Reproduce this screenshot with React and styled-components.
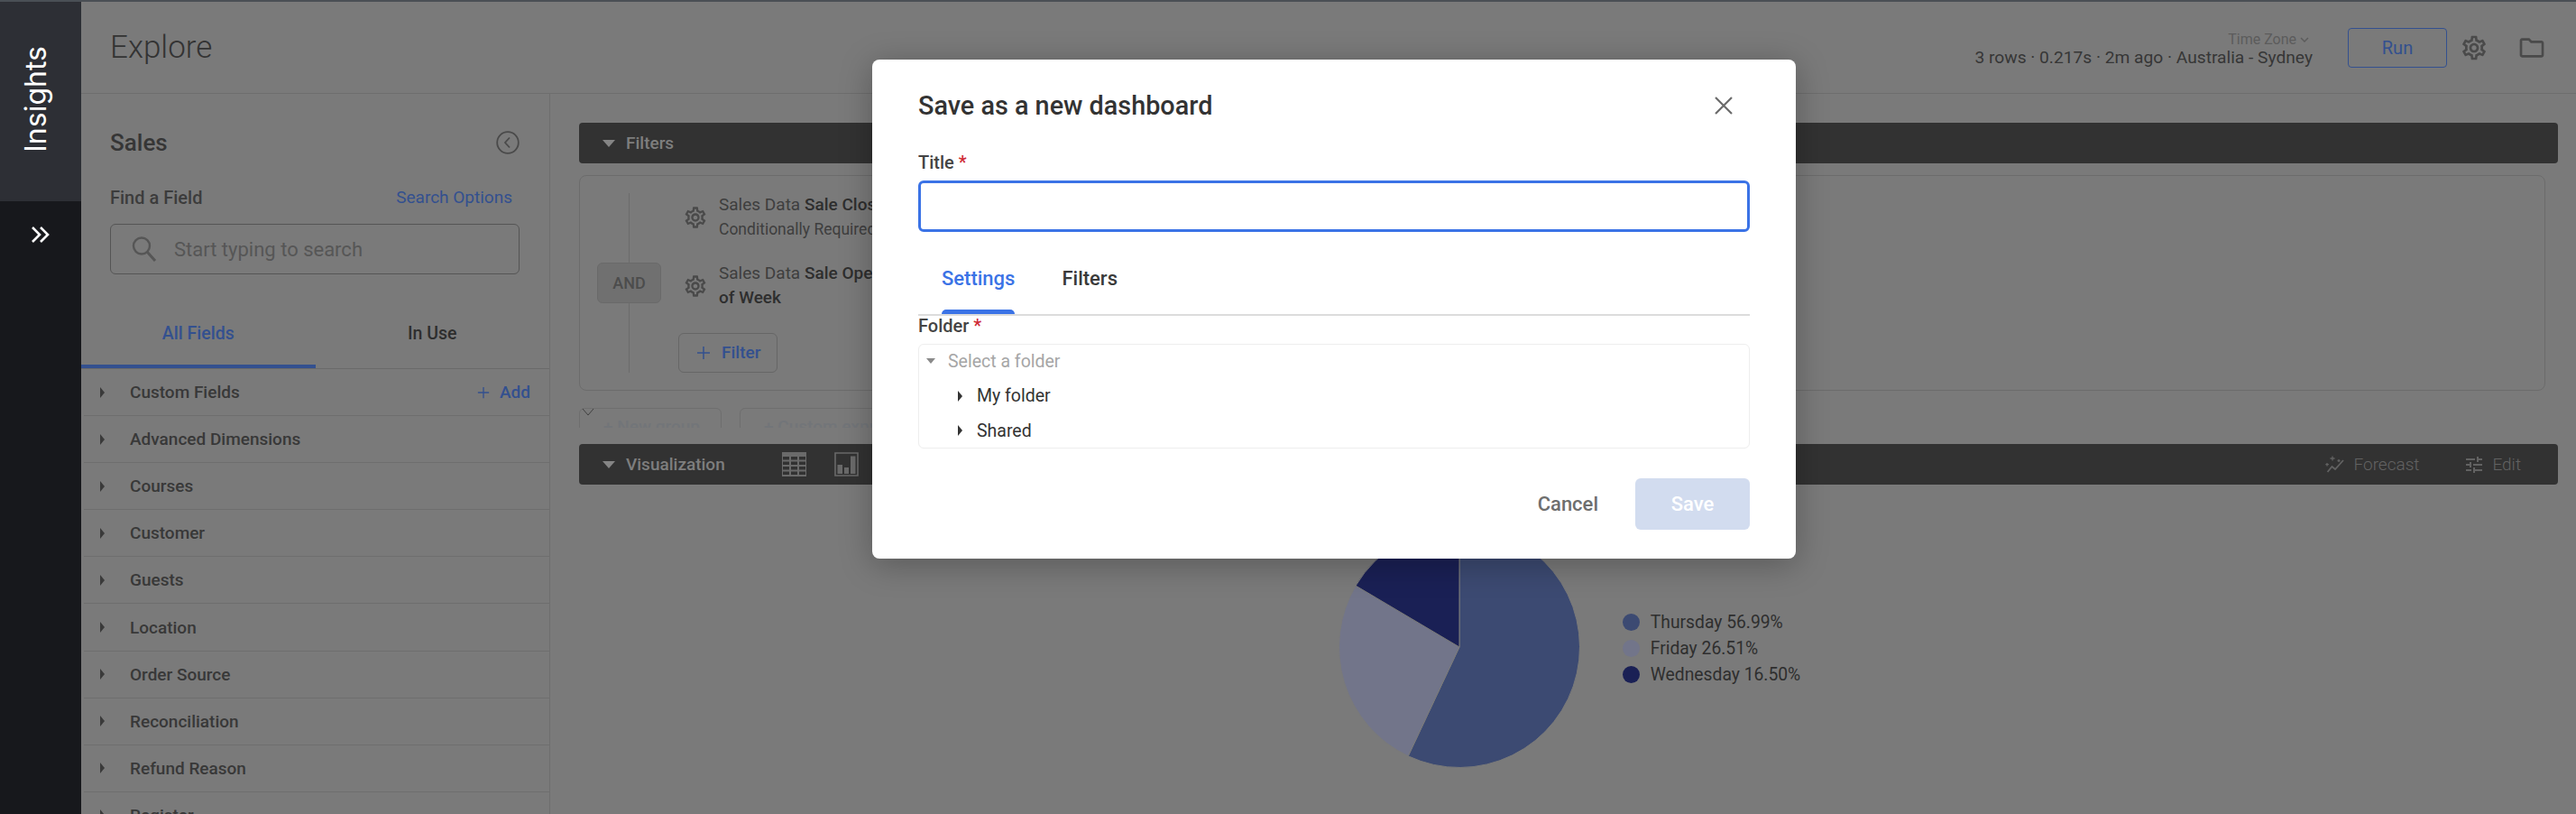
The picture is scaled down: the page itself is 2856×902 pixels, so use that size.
import React from "react";
import styled, { createGlobalStyle } from "styled-components";
import { MdOutlineSettings, MdOutlineFolder, MdTune, MdKeyboardArrowDown } from "react-icons/md";

const GlobalStyle = createGlobalStyle`
  html, body {
    margin: 0;
    padding: 0;
    background: #7a7a7a;
  }
  * {
    box-sizing: border-box;
  }
  body {
    font-family: Roboto, "Liberation Sans", sans-serif;
    color: #383838;
  }
`;

const Page = styled.div`
  position: relative;
  width: 2856px;
  height: 902px;
  overflow: hidden;
  display: flex;
  flex-direction: column;
  background: #7a7a7a;
`;

const TopStrip = styled.div`
  height: 2px;
  flex: none;
  background: #4a4f55;
`;

const Shell = styled.div`
  flex: 1;
  min-height: 0;
  display: flex;
`;

const Nav = styled.nav`
  width: 90px;
  flex: none;
  background: #17181c;
  display: flex;
  flex-direction: column;
  align-items: center;
`;

const NavBrand = styled.div`
  width: 100%;
  height: 221px;
  background: #2d2f35;
  display: flex;
  justify-content: flex-start;
  align-items: flex-start;
  padding: 49px 0 0 20px;
`;

const NavTitle = styled.span`
  writing-mode: vertical-rl;
  transform: rotate(180deg);
  font-family: Inter, Roboto, sans-serif;
  font-size: 32px;
  font-weight: 400;
  line-height: 40px;
  color: #fff;
`;

const NavExpand = styled.div`
  margin-top: 27px;
  height: 24px;
  color: #fff;
`;

const Main = styled.div`
  flex: 1;
  min-width: 0;
  display: flex;
  flex-direction: column;
`;

const Header = styled.header`
  height: 102px;
  flex: none;
  border-bottom: 1px solid #6e6e6e;
  display: flex;
  align-items: flex-start;
  justify-content: space-between;
  padding: 29px 33px 0 32px;
`;

const PageTitle = styled.h1`
  margin: 0;
  font-size: 35px;
  line-height: 44px;
  font-weight: 300;
  color: #333;
`;

const HeaderRight = styled.div`
  display: flex;
  align-items: center;
`;

const Status = styled.div`
  display: flex;
  flex-direction: column;
  align-items: flex-end;
  margin-right: 39px;
  margin-top: 1px;
`;

const TimeZone = styled.div`
  display: flex;
  align-items: center;
  font-size: 16px;
  line-height: 20px;
  color: #5c5c5c;
`;

const StatusLine = styled.div`
  font-size: 19.2px;
  line-height: 20px;
  color: #363636;
`;

const RunButton = styled.button`
  width: 110px;
  height: 44px;
  border: 1.5px solid #33508f;
  border-radius: 4px;
  background: transparent;
  font: 400 20px Roboto, sans-serif;
  color: #33508f;
  margin-right: 14px;
`;

const HeaderIcon = styled.span`
  display: flex;
  color: #4a4a4a;
  margin-left: ${(p) => p.$gap || 0}px;
`;

const Body = styled.div`
  flex: 1;
  min-height: 0;
  display: flex;
`;

const Explorer = styled.aside`
  width: 520px;
  flex: none;
  border-right: 1px solid #6e6e6e;
  display: flex;
  flex-direction: column;
`;

const ExplorerHead = styled.div`
  height: 30px;
  flex: none;
  margin: 39px 33px 0 32px;
  display: flex;
  align-items: center;
  justify-content: space-between;
`;

const ExplorerTitle = styled.div`
  font-size: 26px;
  font-weight: 500;
  color: #363636;
`;

const FindRow = styled.div`
  flex: none;
  margin: 34px 41px 0 32px;
  display: flex;
  justify-content: space-between;
  font-size: 20px;
  line-height: 24px;
  font-weight: 500;
  color: #3c3c3c;
`;

const BlueLink = styled.span`
  font-size: 19px;
  font-weight: 400;
  color: #33508f;
`;

const SearchBox = styled.div`
  flex: none;
  margin: 17px 33px 0 32px;
  height: 56px;
  border: 1.5px solid #555;
  border-radius: 6px;
  display: flex;
  align-items: center;
  padding-left: 22px;
  gap: 18px;
  font-size: 22px;
  color: #565656;
`;

const FieldTabs = styled.div`
  margin-top: 40px;
  height: 65px;
  flex: none;
  display: flex;
  border-bottom: 1px solid #6a6a6a;
`;

const FieldTab = styled.div`
  width: 260px;
  height: 64px;
  padding-top: 14px;
  line-height: 24px;
  text-align: center;
  font-size: 19.5px;
  font-weight: 500;
  color: ${(p) => (p.$active ? "#33508f" : "#2e2e2e")};
  border-bottom: 4px solid ${(p) => (p.$active ? "#33508f" : "transparent")};
`;

const FieldRow = styled.div`
  height: 52.1px;
  flex: none;
  margin-left: 3px;
  border-bottom: 1px solid #6e6e6e;
  display: flex;
  align-items: center;
  padding: 0 21px 0 18px;
  font-size: 19px;
  font-weight: 500;
  color: #383838;
`;

const RightCaret = styled.span`
  width: 0;
  height: 0;
  flex: none;
  border-style: solid;
  border-width: ${(p) => p.$size || 6}px 0 ${(p) => p.$size || 6}px ${(p) => (p.$size || 6) - 1}px;
  border-color: transparent transparent transparent ${(p) => p.$color || "#3a3a3a"};
`;

const FieldName = styled.span`
  margin-left: 28px;
  flex: 1;
`;

const AddField = styled.span`
  display: flex;
  align-items: center;
  gap: 11px;
  color: #33508f;
  font-weight: 500;
`;

const Workspace = styled.section`
  flex: 1;
  min-width: 0;
  padding: 32px 20px 0 32px;
`;

const SectionBar = styled.div`
  height: 45px;
  margin-top: ${(p) => p.$top || 0}px;
  background: #323232;
  border-radius: 4px;
  display: flex;
  align-items: center;
  padding-left: 26px;
  font-size: 19px;
  font-weight: 500;
  color: #7e7e7e;
`;

const DownCaret = styled.span`
  width: 0;
  height: 0;
  flex: none;
  border-style: solid;
  border-width: ${(p) => p.$h || 8}px ${(p) => p.$w || 7}px 0;
  border-color: ${(p) => p.$color || "#858585"} transparent transparent;
  margin-right: ${(p) => p.$gap ?? 12}px;
`;

const ViewIcons = styled.div`
  display: flex;
  align-items: center;
  gap: 31px;
  margin-left: 63px;
  flex: 1;
`;

const BarAction = styled.span`
  display: flex;
  align-items: center;
  gap: ${(p) => p.$inner}px;
  font-size: 19px;
  font-weight: 300;
  color: #626262;
  margin-right: ${(p) => p.$gap}px;
`;

const FilterBox = styled.div`
  height: 239px;
  margin: 13px 14px 0 0;
  border: 1px solid #6c6c6c;
  border-radius: 8px;
  padding: 19px 0 19px 19px;
  display: flex;
  gap: 19px;
`;

const AndColumn = styled.div`
  width: 71px;
  flex: none;
  display: flex;
  flex-direction: column;
  align-items: center;
`;

const AndLine = styled.div`
  width: 1px;
  flex: 1;
  background: #6c6c6c;
`;

const AndPill = styled.div`
  width: 71px;
  height: 45px;
  flex: none;
  display: flex;
  align-items: center;
  justify-content: center;
  background: #707070;
  border: 1px solid #6a6a6a;
  border-radius: 6px;
  font-size: 18px;
  font-weight: 500;
  color: #4c4c4c;
`;

const FilterColumn = styled.div`
  display: flex;
  flex-direction: column;
`;

const FilterRow = styled.div`
  display: flex;
  align-items: center;
  gap: 12px;
  padding-left: 5px;
  margin-bottom: 23px;
  height: 54px;
  color: #4a4a4a;
`;

const FilterText = styled.div`
  white-space: nowrap;
  font-size: 19px;
  line-height: 26.5px;
  color: #3e3e3e;

  b {
    font-weight: 500;
    color: #2e2e2e;
  }
`;

const FilterHint = styled.span`
  font-size: 17.5px;
`;

const AddFilter = styled.div`
  width: 110px;
  height: 45px;
  margin-top: 2px;
  border: 1px solid #666;
  border-radius: 6px;
  display: flex;
  align-items: center;
  gap: 12px;
  padding-left: 19px;
  font-size: 19px;
  font-weight: 500;
  color: #33508f;
`;

const GroupActions = styled.div`
  position: relative;
  height: 22px;
  margin-top: 19px;
  overflow: hidden;
  display: flex;
  gap: 20px;
  align-items: flex-start;
`;

const GroupButton = styled.div`
  height: 45px;
  width: ${(p) => p.$width}px;
  flex: none;
  border: 1px solid #6e6e6e;
  border-radius: 6px;
  padding: 8px 0 0 26px;
  font-size: 19px;
  line-height: 24px;
  font-weight: 500;
  color: #727579;
`;

const CollapseMark = styled.svg`
  position: absolute;
  left: 3px;
  top: 0;
`;

const ChartArea = styled.div`
  margin-top: 46px;
  padding-left: 2px;
  display: flex;
  justify-content: center;
  align-items: center;
  gap: 47px;
`;

const Legend = styled.div`
  display: flex;
  flex-direction: column;
  gap: 5px;
  margin-top: 3px;
`;

const LegendItem = styled.div`
  display: flex;
  align-items: center;
  gap: 12px;
  height: 24px;
  font-size: 19.3px;
  color: #2e2e2e;
`;

const LegendDot = styled.span`
  width: 19px;
  height: 19px;
  border-radius: 50%;
  background: ${(p) => p.$color};
`;

const Dialog = styled.div`
  position: absolute;
  left: 967px;
  top: 66px;
  width: 1024px;
  height: 553px;
  background: #fff;
  border-radius: 8px;
  box-shadow: 0 6px 36px rgba(0, 0, 0, 0.28);
  padding: 34px 51px 32px;
  display: flex;
  flex-direction: column;
`;

const DialogHead = styled.div`
  height: 34px;
  flex: none;
  display: flex;
  align-items: center;
  justify-content: space-between;
`;

const DialogTitle = styled.h2`
  margin: 0;
  font-size: 28.8px;
  font-weight: 500;
  color: #333;
`;

const CloseIcon = styled.svg`
  margin-right: 18px;
`;

const FormLabel = styled.label`
  display: block;
  margin-top: ${(p) => p.$top || 0}px;
  font-size: 20px;
  line-height: ${(p) => p.$line || 26}px;
  font-weight: 500;
  color: #444;

  i {
    font-style: normal;
    color: #cf2a35;
  }
`;

const TitleInput = styled.input`
  display: block;
  width: 100%;
  height: 57px;
  margin-top: 7px;
  flex: none;
  border: 3px solid #3b73e6;
  border-radius: 6px;
  outline: none;
  background: #fff;
`;

const DialogTabs = styled.div`
  margin-top: 20px;
  flex: none;
  display: flex;
  gap: 52px;
  padding-left: 26px;
  border-bottom: 2px solid #dcdcdc;
`;

const DialogTab = styled.div`
  padding-top: 20px;
  font-size: 22px;
  line-height: 24px;
  font-weight: 500;
  color: ${(p) => (p.$active ? "#3b73e6" : "#3a3a3a")};

  &::after {
    content: "";
    display: block;
    height: 5px;
    margin-top: 22px;
    border-radius: 5px 5px 0 0;
    background: ${(p) => (p.$active ? "#3b73e6" : "transparent")};
  }
`;

const Tree = styled.div`
  margin-top: 8px;
  flex: none;
  height: 116px;
  border: 1px solid #eeeeee;
  border-radius: 6px;
`;

const TreeRow = styled.div`
  height: 38.5px;
  display: flex;
  align-items: center;
  gap: ${(p) => (p.$root ? 14 : 16)}px;
  padding-left: ${(p) => (p.$root ? 8 : 43)}px;
  font-size: 19.5px;
  color: ${(p) => (p.$root ? "#a6a6a6" : "#333")};
  margin-top: ${(p) => (p.$root ? -1 : 0)}px;
`;

const DialogFooter = styled.div`
  margin-top: 33px;
  display: flex;
  align-items: center;
  justify-content: flex-end;
  gap: 41px;
`;

const CancelButton = styled.span`
  font-size: 22px;
  font-weight: 500;
  color: #6e6e6e;
`;

const SaveButton = styled.div`
  width: 127px;
  height: 57px;
  border-radius: 6px;
  background: #d2dcef;
  display: flex;
  align-items: center;
  justify-content: center;
  font-size: 22px;
  font-weight: 500;
  color: #fff;
`;

const FIELDS = [
  "Advanced Dimensions",
  "Courses",
  "Customer",
  "Guests",
  "Location",
  "Order Source",
  "Reconciliation",
  "Refund Reason",
  "Register",
];

const SLICES = [
  { label: "Thursday", value: 56.99, color: "#3c4a72" },
  { label: "Friday", value: 26.51, color: "#72758a" },
  { label: "Wednesday", value: 16.5, color: "#1a2055" },
];

function piePaths(cx, cy, r) {
  let start = 0;
  return SLICES.map((s) => {
    const end = start + (s.value / 100) * Math.PI * 2;
    const large = end - start > Math.PI ? 1 : 0;
    const x1 = cx + r * Math.sin(start);
    const y1 = cy - r * Math.cos(start);
    const x2 = cx + r * Math.sin(end);
    const y2 = cy - r * Math.cos(end);
    start = end;
    return { ...s, d: `M${cx} ${cy}L${x1} ${y1}A${r} ${r} 0 ${large} 1 ${x2} ${y2}Z` };
  });
}

const PieChart = () => (
  <svg width="268" height="268" viewBox="0 0 268 268">
    {piePaths(134, 134, 133.5).map((s) => (
      <path key={s.label} d={s.d} fill={s.color} stroke="#7a7a7a" strokeWidth="1" />
    ))}
  </svg>
);

const SearchIcon = () => (
  <svg width="30" height="30" viewBox="0 0 30 30" fill="none" stroke="#565656" strokeWidth="2.4">
    <circle cx="12" cy="11.5" r="9" />
    <path d="M18.5 18.5L27 28" strokeWidth="3" />
  </svg>
);

const CollapseIcon = () => (
  <svg width="26" height="26" viewBox="0 0 26 26" fill="none" stroke="#4a4a4a" strokeWidth="1.8">
    <circle cx="13" cy="13" r="11.8" />
    <path d="M15 7.5L10 13l5 5.5" />
  </svg>
);

const DoubleChevron = () => (
  <svg width="22" height="20" viewBox="0 0 22 20" fill="none" stroke="#fff" strokeWidth="2.6">
    <path d="M2 2l8 8-8 8M11 2l8 8-8 8" />
  </svg>
);

const TableIcon = () => (
  <svg width="27" height="27" viewBox="0 0 27 27" fill="#6a6a6a">
    <path d="M0 0h27v27H0z" fill="#6a6a6a" />
    <path
      d="M1 5h7v3.5H1zM10 5h7v3.5h-7zM19 5h7v3.5h-7zM1 10.5h7V14H1zM10 10.5h7V14h-7zM19 10.5h7V14h-7zM1 16h7v3.5H1zM10 16h7v3.5h-7zM19 16h7v3.5h-7zM1 21.5h7V25H1zM10 21.5h7V25h-7zM19 21.5h7V25h-7z"
      fill="#323232"
    />
  </svg>
);

const BarsIcon = () => (
  <svg width="27" height="27" viewBox="0 0 27 27">
    <path d="M1 1h25v25H1z" fill="none" stroke="#6a6a6a" strokeWidth="1.6" />
    <path d="M3.5 14h5.5v10H3.5zM11 17h5v7h-5zM18 4.5h5.5V24H18z" fill="#6a6a6a" />
  </svg>
);

const ForecastIcon = () => (
  <svg width="22" height="20" viewBox="0 0 22 20" fill="none" stroke="#626262" strokeWidth="1.8">
    <path d="M2.5 18l5-6 3.5 3 9-10" />
    <path d="M8 0.5v5M5.5 3h5M2 8v3.5M0.3 9.7h3.6M15 4v3M13.5 5.5h3" strokeWidth="1.3" />
  </svg>
);

const PlusIcon = ({ size = 16, color = "#33508f" }) => (
  <svg width={size} height={size} viewBox="0 0 16 16" stroke={color} strokeWidth="1.5">
    <path d="M8 1v14M1 8h14" />
  </svg>
);

export default function App() {
  return (
    <>
      <GlobalStyle />
      <Page>
        <TopStrip />
        <Shell>
          <Nav>
            <NavBrand>
              <NavTitle>Insights</NavTitle>
            </NavBrand>
            <NavExpand>
              <DoubleChevron />
            </NavExpand>
          </Nav>
          <Main>
            <Header>
              <PageTitle>Explore</PageTitle>
              <HeaderRight>
                <Status>
                  <TimeZone>
                    Time Zone
                    <MdKeyboardArrowDown size={18} />
                  </TimeZone>
                  <StatusLine>3 rows · 0.217s · 2m ago · Australia - Sydney</StatusLine>
                </Status>
                <RunButton>Run</RunButton>
                <HeaderIcon>
                  <MdOutlineSettings size={32} />
                </HeaderIcon>
                <HeaderIcon $gap={32}>
                  <MdOutlineFolder size={32} />
                </HeaderIcon>
              </HeaderRight>
            </Header>
            <Body>
              <Explorer>
                <ExplorerHead>
                  <ExplorerTitle>Sales</ExplorerTitle>
                  <CollapseIcon />
                </ExplorerHead>
                <FindRow>
                  Find a Field
                  <BlueLink>Search Options</BlueLink>
                </FindRow>
                <SearchBox>
                  <SearchIcon />
                  Start typing to search
                </SearchBox>
                <FieldTabs>
                  <FieldTab $active>All Fields</FieldTab>
                  <FieldTab>In Use</FieldTab>
                </FieldTabs>
                <FieldRow>
                  <RightCaret />
                  <FieldName>Custom Fields</FieldName>
                  <AddField>
                    <PlusIcon size={14} />
                    Add
                  </AddField>
                </FieldRow>
                {FIELDS.map((name) => (
                  <FieldRow key={name}>
                    <RightCaret />
                    <FieldName>{name}</FieldName>
                  </FieldRow>
                ))}
              </Explorer>
              <Workspace>
                <SectionBar>
                  <DownCaret />
                  Filters
                </SectionBar>
                <FilterBox>
                  <AndColumn>
                    <AndLine />
                    <AndPill>AND</AndPill>
                    <AndLine />
                  </AndColumn>
                  <FilterColumn>
                    <FilterRow>
                      <MdOutlineSettings size={28} />
                      <FilterText>
                        Sales Data <b>Sale Closed Date</b>
                        <br />
                        <FilterHint>Conditionally Required</FilterHint>
                      </FilterText>
                    </FilterRow>
                    <FilterRow>
                      <MdOutlineSettings size={28} />
                      <FilterText>
                        Sales Data <b>Sale Opened Day</b>
                        <br />
                        <b>of Week</b>
                      </FilterText>
                    </FilterRow>
                    <AddFilter>
                      <PlusIcon />
                      Filter
                    </AddFilter>
                  </FilterColumn>
                </FilterBox>
                <GroupActions>
                  <GroupButton $width={158}>+ New group</GroupButton>
                  <GroupButton $width={240}>+ Custom expression</GroupButton>
                  <CollapseMark width="14" height="9" viewBox="0 0 14 9" fill="none" stroke="#404040" strokeWidth="1">
                    <path d="M1 1l6 7 6-7" />
                  </CollapseMark>
                </GroupActions>
                <SectionBar $top={18}>
                  <DownCaret />
                  Visualization
                  <ViewIcons>
                    <TableIcon />
                    <BarsIcon />
                  </ViewIcons>
                  <BarAction $gap={49} $inner={10}>
                    <ForecastIcon />
                    Forecast
                  </BarAction>
                  <BarAction $gap={41} $inner={8}>
                    <MdTune size={24} />
                    Edit
                  </BarAction>
                </SectionBar>
                <ChartArea>
                  <PieChart />
                  <Legend>
                    {SLICES.map((s) => (
                      <LegendItem key={s.label}>
                        <LegendDot $color={s.color} />
                        {s.label} {s.value.toFixed(2)}%
                      </LegendItem>
                    ))}
                  </Legend>
                </ChartArea>
              </Workspace>
            </Body>
          </Main>
        </Shell>
        <Dialog>
          <DialogHead>
            <DialogTitle>Save as a new dashboard</DialogTitle>
            <CloseIcon width="22" height="22" viewBox="0 0 22 22" stroke="#6a6a6a" strokeWidth="2.2">
              <path d="M2 2l18 18M20 2L2 20" />
            </CloseIcon>
          </DialogHead>
          <FormLabel $top={33}>
            Title <i>*</i>
          </FormLabel>
          <TitleInput />
          <DialogTabs>
            <DialogTab $active>Settings</DialogTab>
            <DialogTab>Filters</DialogTab>
          </DialogTabs>
          <FormLabel $line={23}>
            Folder <i>*</i>
          </FormLabel>
          <Tree>
            <TreeRow $root>
              <DownCaret $h={6} $w={5} $color="#8a8a8a" $gap={0} />
              Select a folder
            </TreeRow>
            <TreeRow>
              <RightCaret $size={6} $color="#333" />
              My folder
            </TreeRow>
            <TreeRow>
              <RightCaret $size={6} $color="#333" />
              Shared
            </TreeRow>
          </Tree>
          <DialogFooter>
            <CancelButton>Cancel</CancelButton>
            <SaveButton>Save</SaveButton>
          </DialogFooter>
        </Dialog>
      </Page>
    </>
  );
}
